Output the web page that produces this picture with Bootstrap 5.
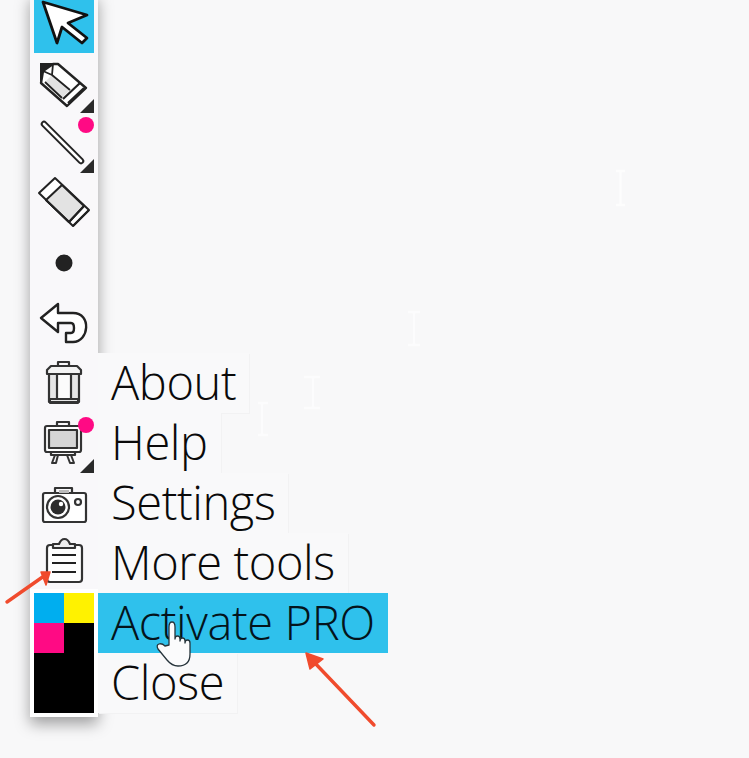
<!DOCTYPE html>
<html lang="en">
<head>
    <meta charset="UTF-8">
    <meta name="viewport" content="width=device-width, initial-scale=1.0">
    <title>Drawing toolbar</title>
    <link href="https://cdn.jsdelivr.net/npm/bootstrap@5.3.0/dist/css/bootstrap.min.css" rel="stylesheet">
    <style>
        html, body {
            height: 100%;
        }
        body {
            background-color: #f8f8f9;
            overflow: hidden;
            margin: 0;
        }
        .tool-rail {
            position: relative;
            width: 68px;
            margin: -7px 0 0 30px;
            padding: 0 4px 4px;
            background-color: #f9f8fa;
            box-shadow: 0 7px 14px rgba(0, 0, 0, 0.36);
        }
        .tool-slot {
            width: 60px;
            height: 60px;
        }
        .tool-slot svg {
            display: block;
        }
        .tool-active {
            background-color: #2fc1ec;
        }
        .palette-grid {
            display: grid;
            grid-template-columns: 30px 30px;
            grid-template-rows: repeat(4, 30px);
            background-color: #000;
            outline: 4px solid #fff;
        }
        .swatch-cyan { background-color: #00aeef; }
        .swatch-yellow { background-color: #fff200; }
        .swatch-pink { background-color: #ff0a84; }
        .side-menu {
            position: absolute;
            left: 68px;
            top: 360px;
        }
        .menu-row {
            height: 60px;
            padding: 0 13px;
            color: #0a0a0a;
            font-family: "Open Sans", "Liberation Sans", sans-serif;
            font-weight: 300;
            font-size: 47px;
            line-height: 58px;
            letter-spacing: -0.4px;
            white-space: nowrap;
            background-color: #f9f9fa;
            box-shadow: 1px 1px 0 #f2f2f3;
        }
        .menu-row-active {
            background-color: #2fc1ec;
            color: #04141c;
            box-shadow: none;
        }
        .screen-marks {
            position: absolute;
            left: 0;
            top: 0;
            pointer-events: none;
        }
    </style>
</head>
<body>
    <div class="tool-rail d-flex flex-column">
        <!-- pointer -->
        <div class="tool-slot tool-active">
            <svg width="60" height="60" viewBox="0 0 60 60"><path d="M9 9 53 22 34 30 53 45 48 50 28 34 23 50Z" fill="#fff" stroke="#111" stroke-width="2.800" stroke-linejoin="round"/></svg>
        </div>
        <!-- pencil -->
        <div class="tool-slot">
            <svg width="60" height="60" viewBox="0 0 60 60" fill="none" stroke="#222" stroke-width="2.400" stroke-linejoin="round">
                <path d="M6 10H25L6 29Z" fill="#222" stroke="none"/>
                <path d="M19 11 24 11 52 35 33 53 7 30 9 18Z" fill="#fff"/>
                <path d="M18 22 36 37 28 45 11 29Z" fill="#e2e2e2" stroke="none"/>
                <path d="M9 18 18 22 19 11M18 22 36 37M11 29 28 45" stroke-width="1.800"/>
                <path d="M29 46 46 30M34 50 50 35" stroke-width="2.200"/>
                <path d="M46 60H60V46Z" fill="#2a2a2a" stroke="none"/>
            </svg>
        </div>
        <!-- line -->
        <div class="tool-slot">
            <svg width="60" height="60" viewBox="0 0 60 60">
                <path d="M10 11 47 48" stroke="#222" stroke-width="6.500" stroke-linecap="round"/>
                <path d="M10 11 47 48" stroke="#fff" stroke-width="2.600" stroke-linecap="round"/>
                <circle cx="52" cy="12" r="8" fill="#ff0a84"/>
                <path d="M46 60H60V46Z" fill="#2a2a2a"/>
            </svg>
        </div>
        <!-- eraser -->
        <div class="tool-slot">
            <svg width="60" height="60" viewBox="0 0 60 60" fill="none" stroke="#222" stroke-width="2" stroke-linejoin="round">
                <path d="M5 20 21 5 55 37 39 53Z" fill="#fff"/>
                <path d="M12 27 28 12 50 33 35 49Z" fill="#e3e3e3"/>
                <path d="M12 27 35 49M35 49 50 33M39 53 55 37"/>
            </svg>
        </div>
        <!-- dot size -->
        <div class="tool-slot">
            <svg width="60" height="60" viewBox="0 0 60 60"><circle cx="30" cy="30" r="8.500" fill="#222"/></svg>
        </div>
        <!-- undo -->
        <div class="tool-slot">
            <svg width="60" height="60" viewBox="0 0 60 60"><path d="M24 11 7 25 24 39V30H37C41 30 41 40 37 40H32V49H39C55 49 58 20 39 20H24Z" fill="#fff" stroke="#222" stroke-width="2.400" stroke-linejoin="round"/></svg>
        </div>
        <!-- trash -->
        <div class="tool-slot">
            <svg width="60" height="60" viewBox="0 0 60 60" fill="none" stroke="#333" stroke-width="2.200" stroke-linejoin="round">
                <path d="M24 13V9H35V13"/>
                <path d="M15 21H45V49H15Z" fill="#e6e6e6"/>
                <path d="M23 21H37V47H23Z" fill="#fbfbfb" stroke="none"/>
                <path d="M23 21V46M37 21V46"/>
                <path d="M17 13H43L47 17V21H13V17Z" fill="#f3f3f3"/>
                <path d="M16 46H44V50H16Z" stroke-width="2"/>
            </svg>
        </div>
        <!-- easel -->
        <div class="tool-slot">
            <svg width="60" height="60" viewBox="0 0 60 60" fill="none" stroke="#333" stroke-width="2.200" stroke-linejoin="round">
                <path d="M23 13V9H35V13"/>
                <rect x="11" y="13" width="36" height="26" rx="2" fill="#fff"/>
                <rect x="15" y="17" width="28" height="18" fill="#d5d5d5"/>
                <path d="M17 39V42H41V39"/>
                <path d="M21 42 18 50H22L24 42M33 42 36 50H40L37 42" stroke-width="2"/>
                <circle cx="52" cy="12" r="8" fill="#ff0a84" stroke="none"/>
                <path d="M46 60H60V46Z" fill="#2a2a2a" stroke="none"/>
            </svg>
        </div>
        <!-- camera -->
        <div class="tool-slot">
            <svg width="60" height="60" viewBox="0 0 60 60" fill="none" stroke="#333" stroke-width="2.200" stroke-linejoin="round">
                <path d="M21 20V15H38V20"/>
                <rect x="9" y="20" width="43" height="29" rx="2" fill="#fff"/>
                <path d="M25 17H35V20H25Z" fill="#bbb" stroke="none"/>
                <circle cx="24" cy="34" r="11"/>
                <circle cx="24" cy="34" r="7.500" fill="#2c2c2c" stroke="none"/>
                <circle cx="27" cy="31" r="2.200" fill="#fff" stroke="none"/>
                <circle cx="44" cy="29" r="3"/>
            </svg>
        </div>
        <!-- clipboard -->
        <div class="tool-slot">
            <svg width="60" height="60" viewBox="0 0 60 60" fill="none" stroke="#333" stroke-width="2.200" stroke-linejoin="round">
                <rect x="13" y="12" width="35" height="37" rx="3" fill="#fff"/>
                <path d="M19 15V11H25Q27 6 30.500 6T36 11H41V15Z" fill="#eee"/>
                <path d="M18 22H42M18 30H42M18 39H42" stroke="#222"/>
            </svg>
        </div>
        <!-- colours -->
        <div class="palette-grid">
            <div class="swatch-cyan"></div>
            <div class="swatch-yellow"></div>
            <div class="swatch-pink"></div>
        </div>

        <div class="side-menu d-flex flex-column align-items-start">
            <div class="menu-row">About</div>
            <div class="menu-row">Help</div>
            <div class="menu-row">Settings</div>
            <div class="menu-row">More tools</div>
            <div class="menu-row menu-row-active">Activate PRO</div>
            <div class="menu-row">Close</div>
        </div>
    </div>

    <!-- annotations drawn over the recording -->
    <svg class="screen-marks" width="749" height="758" viewBox="0 0 749 758">
        <g stroke="#ffffff" stroke-width="2.400" fill="none" opacity="0.7">
            <path d="M616 171H625M620.500 171V205M616 205H625"/>
            <path d="M408 312H420M414 312V345M408 345H420"/>
            <path d="M304 377H320M313 377V408M304 408H320"/>
            <path d="M258 403H268M262 403V435M258 435H268"/>
        </g>
        <g fill="#f04b2d" stroke="#f04b2d" stroke-linejoin="round" stroke-linecap="round">
            <path d="M7 602 44 576" stroke-width="3.400"/>
            <path d="M50 572 41 572 46 585Z" stroke-width="1.500"/>
            <path d="M374 725 312 660" stroke-width="3.400"/>
            <path d="M306 653 310 669 323 659Z" stroke-width="1.500"/>
        </g>
        <path d="M169 645V627q0-5 3-5t3 5V639q0-3 2.500-3t2.500 3V641q0-3 2.500-3t2.500 3V643q0-3 2.500-3t2.500 3V654q0 12-12 12q-6 0-11-6l-9-11q-2-4 1-5 3-1 6 2Z" fill="#fbfbfc" stroke="#27343b" stroke-width="1.300" stroke-linejoin="round"/>
    </svg>

    <script src="https://cdn.jsdelivr.net/npm/bootstrap@5.3.0/dist/js/bootstrap.bundle.min.js"></script>
</body>
</html>
